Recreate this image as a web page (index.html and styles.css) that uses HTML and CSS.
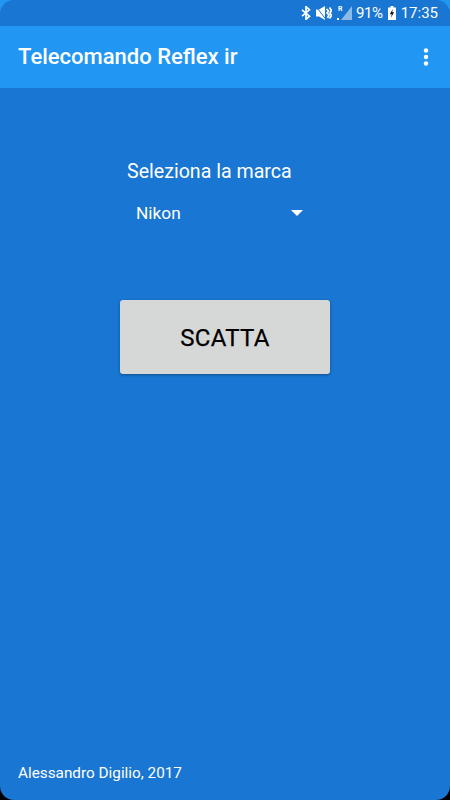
FILE: index.html
```html
<!DOCTYPE html>
<html lang="it">
<head>
<meta charset="utf-8">
<title>Telecomando Reflex ir</title>
<link rel="stylesheet" href="styles.css">
</head>
<body>
<div class="screen">
  <div class="statusbar">
    <svg class="st-bt" width="10" height="14" viewBox="0 0 10 14"><path d="M1 3.800l7.500 6.400L5 13.300V.7l3.500 3.100L1 10.200" fill="none" stroke="#fff" stroke-width="1.700"/></svg>
    <svg class="st-mute" width="16" height="14" viewBox="0 0 16 14"><path d="M0 3.500h3L9 0v14L3 10.500H0z" fill="#fff"/><path d="M0 .5l10 13" stroke="#1976d2" stroke-width="1"/><path d="M10.500 3l2 2-1.500 2 2 2-1.500 3M13.500 1.500l2 3-1.500 2.500 1.500 2.500-2 3" fill="none" stroke="#fff" stroke-width="1.700"/></svg>
    <div class="st-signal">
      <svg width="15" height="16" viewBox="0 0 15 16"><path d="M15 1v14H4z" fill="#fff" fill-opacity=".5"/><path d="M0 15h2v-2H0z" fill="#fff"/></svg>
      <span class="st-r">R</span>
    </div>
    <span class="st-text st-pct">91%</span>
    <svg class="st-bat" width="8" height="14" viewBox="0 0 8 14"><path d="M2.500 0h3v1.500H8V14H0V1.500h2.500z" fill="#fff"/><path d="M4.800 3L1.800 8.300h2l-1 3.700 3.300-5.700H4.200z" fill="#111"/></svg>
    <span class="st-text">17:35</span>
  </div>
  <header class="appbar">
    <h1 class="title">Telecomando Reflex ir</h1>
    <svg class="menu" width="6" height="18" viewBox="0 0 6 18"><circle cx="3" cy="2.500" r="2.200"/><circle cx="3" cy="9" r="2.200"/><circle cx="3" cy="15.500" r="2.200"/></svg>
  </header>
  <main class="content">
    <p class="label">Seleziona la marca</p>
    <div class="spinner">
      <span>Nikon</span>
      <span class="caret"></span>
    </div>
    <button class="shoot" type="button">SCATTA</button>
  </main>
  <footer class="credit">Alessandro Digilio, 2017</footer>
</div>
</body>
</html>
```
FILE: styles.css
```css
* { box-sizing: border-box; }
html, body { margin: 0; height: 100%; }
body { background: linear-gradient(#2196f3 50%, #000 50%); }
.screen {
  width: 450px; height: 800px; display: flex; flex-direction: column;
  background: #1976d2; border-radius: 14px; overflow: hidden;
  font-family: Roboto, sans-serif; color: #fff;
}
.statusbar {
  height: 26px; flex: none; display: flex; align-items: center; justify-content: flex-end;
  padding: 0 12px 0 0;
}
.st-text { font-size: 15px; line-height: 26px; color: #fff; }
.st-bt { margin-right: 5px; }
.st-mute { margin-right: 5px; }
.st-signal { position: relative; width: 15px; height: 16px; margin-right: 4px; }
.st-r { position: absolute; left: 1px; top: 0; font-size: 7px; font-weight: 700; line-height: 8px; }
.st-pct { margin-right: 5px; letter-spacing: -.4px; }
.st-bat { margin-right: 5px; }
.appbar {
  height: 62px; flex: none; background: #2196f3; display: flex; align-items: center;
  justify-content: space-between; padding: 0 21px 0 18px;
}
.title { margin: 0; font-size: 22px; font-weight: 500; line-height: 28px; color: #fff; }
.menu { fill: #fff; }
.content { flex: 1; display: flex; flex-direction: column; align-items: flex-start; padding: 70px 0 0 120px; }
.label { margin: 0 0 0 7px; font-size: 19.600px; line-height: 28px; white-space: nowrap; }
.spinner {
  width: 183px; height: 48px; margin-top: 3px; display: flex; align-items: center;
  justify-content: space-between; padding: 0 0 0 16px; font-size: 17.300px;
}
.caret { width: 0; height: 0; border-left: 6px solid transparent; border-right: 6px solid transparent; border-top: 6px solid #fff; }
.shoot {
  width: 210px; height: 74px; margin-top: 63px; padding: 2px 0 0; background: #d6d7d7; border: 0; border-radius: 3px;
  box-shadow: 0 1px 3px rgba(0,0,0,.35); font-family: Roboto, sans-serif; font-size: 24px; font-weight: 400;
  color: #000; letter-spacing: .3px; -webkit-text-stroke: .25px #000;
}
.credit { flex: none; padding: 0 0 16px 18px; font-size: 15.300px; line-height: 22px; }
```
